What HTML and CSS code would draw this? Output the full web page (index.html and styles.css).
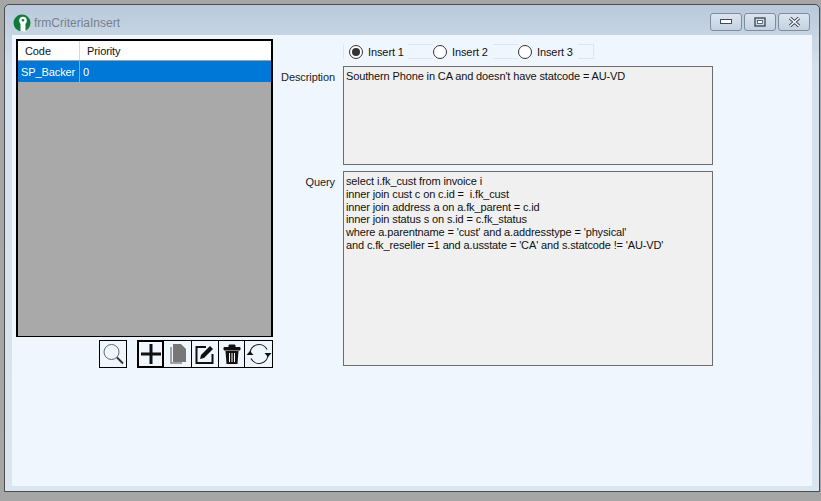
FILE: index.html
```html
<!DOCTYPE html>
<html lang="en">
<head>
<meta charset="utf-8">
<title>frmCriteriaInsert</title>
<link rel="stylesheet" href="styles.css">
</head>
<body>
<div class="window">
  <header class="titlebar">
    <svg class="app-icon" width="18" height="18" viewBox="0 0 18 18"><circle cx="9" cy="9" r="8.5" fill="#0f7a3a"/><circle cx="10" cy="6.500" r="3.800" fill="#fff"/><path d="M7.500 9h5v8.500h-5z" fill="#fff"/><circle cx="10" cy="6.200" r="1.200" fill="#0f7a3a"/></svg>
    <span class="title">frmCriteriaInsert</span>
    <div class="caption-buttons">
      <div class="cap-btn"><svg width="12" height="6" viewBox="0 0 12 6"><rect x="0.5" y="0.5" width="11" height="4" fill="#fff" stroke="#444c5c"/></svg></div>
      <div class="cap-btn"><svg width="12" height="10" viewBox="0 0 12 10"><rect x="1" y="1" width="10" height="8" fill="none" stroke="#444c5c" stroke-width="1.400"/><rect x="3.500" y="3.500" width="5" height="3" fill="#fff" stroke="#444c5c" stroke-width="0.800"/></svg></div>
      <div class="cap-btn"><svg width="13" height="10" viewBox="0 0 13 10"><path d="M2 1l9 8M11 1l-9 8" stroke="#444c5c" stroke-width="3.400"/><path d="M2 1l9 8M11 1l-9 8" stroke="#fff" stroke-width="1.400"/></svg></div>
    </div>
  </header>
  <main class="client">
    <section class="left">
      <div class="grid">
        <div class="grid-head">
          <div class="col-code head-code">Code</div>
          <div class="col-priority">Priority</div>
        </div>
        <div class="grid-row">
          <div class="col-code row-code">SP_Backer</div>
          <div class="col-priority row-priority">0</div>
        </div>
      </div>
      <div class="toolbar">
        <div class="tool tool-search">
          <svg width="24" height="24" viewBox="0 0 24 24"><circle cx="10.500" cy="10" r="7.500" fill="none" stroke="#666" stroke-width="1"/><path d="M16 15.500l6 6" stroke="#333" stroke-width="2"/></svg>
        </div>
        <div class="tool-group">
          <div class="tool tool-add">
            <svg width="20" height="20" viewBox="0 0 20 20"><path d="M10 0v20M0 10h20" stroke="#111" stroke-width="3"/></svg>
          </div>
          <div class="tool tool-copy">
            <svg width="16" height="20" viewBox="0 0 16 20"><path d="M3 0h8l5 5v13H3z" fill="#777"/><path d="M1 3v16h11" fill="none" stroke="#888" stroke-width="1.500"/></svg>
          </div>
          <div class="tool tool-edit">
            <svg width="20" height="20" viewBox="0 0 20 20"><path d="M11 3H1.500v16h16v-9" fill="none" stroke="#111" stroke-width="2"/><path d="M6 11L15 2l3 3-9 9-4 1z" fill="#111"/></svg>
          </div>
          <div class="tool tool-trash">
            <svg width="18" height="20" viewBox="0 0 18 20"><path d="M1 3.500h16V6H1zM6 3.500V1h6v2.500" fill="#111" stroke="#111"/><path d="M2.500 7h13l-1 13h-11z" fill="#111"/><path d="M6.500 9v9M9 9v9M11.500 9v9" stroke="#fff" stroke-width="1"/></svg>
          </div>
          <div class="tool tool-refresh">
            <svg width="26" height="24" viewBox="0 0 26 24"><path d="M4 11a9 9 0 0 1 17-3.500M22 13a9 9 0 0 1-17 3.500" fill="none" stroke="#222" stroke-width="1.200"/><path d="M18.500 11h7L22 15zM.5 13h7L4 9z" fill="#111"/></svg>
          </div>
        </div>
      </div>
    </section>
    <section class="right">
      <div class="radios">
        <label class="radio first"><span class="dot on"></span>Insert 1</label><span class="gap g1"></span>
        <label class="radio"><span class="dot"></span>Insert 2</label><span class="gap g2"></span>
        <label class="radio"><span class="dot"></span>Insert 3</label><span class="gap g3"></span>
      </div>
      <div class="field field-desc">
        <div class="label">Description</div>
        <div class="box">Southern Phone in CA and doesn't have statcode = AU-VD</div>
      </div>
      <div class="field field-query">
        <div class="label">Query</div>
        <div class="box">select i.fk_cust from invoice i
inner join cust c on c.id =  i.fk_cust
inner join address a on a.fk_parent = c.id
inner join status s on s.id = c.fk_status
where a.parentname = 'cust' and a.addresstype = 'physical'
and c.fk_reseller =1 and a.usstate = 'CA' and s.statcode != 'AU-VD'</div>
      </div>
    </section>
  </main>
</div>
</body>
</html>
```
FILE: styles.css
```css
* { box-sizing: border-box; }
html, body { margin: 0; height: 100%; }
body {
  background: #a6a6a6;
  padding: 4px 1px 8px 4px;
  overflow: hidden;
  font-family: "Liberation Sans", Arial, sans-serif;
  font-size: 11px;
  letter-spacing: -0.1px;
  color: #111;
}
.window {
  height: 488px;
  border: 1px solid #4d4d4d;
  border-radius: 5px 5px 0 0;
  background: linear-gradient(#b9c9da, #d3e0ed 60px, #d9e6f1);
  padding: 0 7px 5px 7px;
  display: flex;
  flex-direction: column;
}
.titlebar {
  height: 30px;
  flex: none;
  display: flex;
  align-items: center;
  padding: 6px 0 0 1px;
}
.app-icon { flex: none; }
.title { margin-left: 3px; font-size: 12px; letter-spacing: 0; color: #77818a; }
.caption-buttons { margin-left: auto; margin-right: 2px; display: flex; gap: 2px; margin-top: -2px; }
.cap-btn {
  width: 32px;
  height: 18px;
  border: 1px solid #7e8ca0;
  border-radius: 3px;
  background: linear-gradient(#dbe5ef, #c3d1e0);
  display: flex;
  align-items: center;
  justify-content: center;
}
.client {
  flex: 1;
  background: #eff6fe;
  padding: 4px 0 0 4px;
  display: flex;
}
.left { width: 257px; flex: none; }
.grid {
  height: 298px;
  border: 2px solid #000;
  border-bottom-width: 1px;
  background: #a9a9a9;
}
.grid-head {
  height: 20px;
  background: #fff;
  display: flex;
  align-items: center;
  border-bottom: 1px solid #a0a0a0;
}
.grid-row {
  height: 21px;
  background: #0078d7;
  color: #fff;
  display: flex;
  align-items: center;
}
.col-code { width: 62px; flex: none; height: 100%; display: flex; align-items: center; border-right: 1px solid #d9d9d9; }
.head-code { padding-left: 7px; }
.row-code { padding-left: 3px; border-right-color: #6fb0e6; }
.col-priority { padding-left: 7px; }
.row-priority { padding-left: 3px; }
.toolbar { display: flex; margin-top: 3px; padding-left: 83px; }
.tool {
  flex: none;
  height: 28px;
  border: 1px solid #000;
  border-left: 0;
  display: flex;
  align-items: center;
  justify-content: center;
}
.tool-search { width: 28px; border-left: 1px solid #000; }
.tool-group { display: flex; margin-left: 10px; flex: none; }
.tool-add { width: 27px; border: 2px solid #000; }
.tool-copy { width: 28px; }
.tool-edit { width: 27px; }
.tool-trash { width: 26px; }
.tool-refresh { width: 28px; }
.right { margin-left: -2px; display: flex; flex-direction: column; }
.radios { display: flex; align-items: center; height: 15px; margin: 5px 0 0 72px; }
.radio { display: flex; align-items: center; height: 15px; width: 60px; }
.radio.first { width: 65px; padding-left: 5px; border-left: 1px solid #dfe5ec; }
.dot {
  flex: none;
  width: 14px;
  height: 14px;
  border: 1px solid #333;
  border-radius: 50%;
  background: #fff;
  margin-right: 5px;
  display: flex;
  align-items: center;
  justify-content: center;
}
.dot.on::after {
  content: "";
  width: 8px;
  height: 8px;
  border-radius: 50%;
  background: #333;
}
.gap { height: 15px; border-top: 1px solid #dfe5ec; border-bottom: 1px solid #dfe5ec; display: block; flex: none; }
.g1 { width: 25px; }
.g2 { width: 25px; }
.g3 { width: 16px; border-right: 1px solid #dfe5ec; }
.field { display: flex; }
.field-desc { margin-top: 7px; }
.field-query { margin-top: 6px; }
.label { width: 72px; text-align: right; padding: 5px 8px 0 0; flex: none; color: #222; }
.box {
  width: 370px;
  border: 1px solid #6d6d6d;
  background: #f0f0f0;
  padding: 3px 2px;
  white-space: pre-wrap;
  line-height: 12.800px;
  letter-spacing: -0.130px;
}
.field-desc .box { height: 99px; }
.field-query .box { height: 195px; }
```
